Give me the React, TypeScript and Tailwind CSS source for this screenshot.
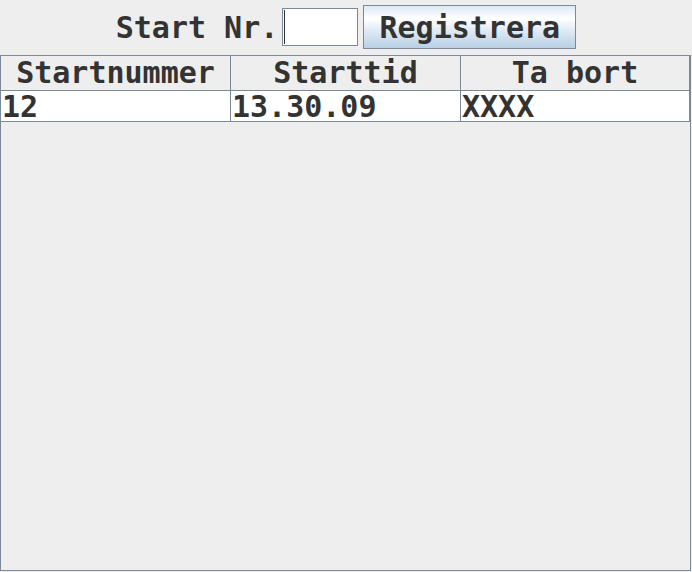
const rows = [{ nr: '12', time: '13.30.09', remove: 'XXXX' }];

const mono = "font-['DejaVu_Sans_Mono',monospace] font-bold text-[30px] text-[#333333]";

export default function App() {
  return (
    <div className={`w-[692px] h-[572px] bg-[#eeeeee] overflow-hidden ${mono}`}>
      {/* top form */}
      <div className="flex justify-center items-center h-[44px] mt-[5px] mb-[6px]">
        <span className="leading-[35px] mr-[4px]">Start Nr.</span>
        <div className="w-[76px] h-[38px] bg-white border border-[#7a8a99] flex mr-[5px]">
          <span className="w-px h-[34px] mt-[1px] ml-[1px] bg-[#333333]" />
        </div>
        <button className="w-[213px] h-[44px] border border-[#7a8a99] leading-[35px] bg-[linear-gradient(to_bottom,#dde8f3_0%,#ffffff_30%,#dde8f3_62%,#b8cfe5_100%)]">
          Registrera
        </button>
      </div>

      {/* table in scroll pane */}
      <div className="w-[691px] h-[516px] border border-[#7a8a99]">
        <div className="grid grid-cols-[230px_230px_229px] h-[35px] border-b border-[#7a8a99]">
          <div className="border-r border-[#7a8a99] text-center leading-[34px]">Startnummer</div>
          <div className="border-r border-[#7a8a99] text-center leading-[34px]">Starttid</div>
          <div className="border-r border-[#7a8a99] text-center leading-[34px]">Ta bort</div>
        </div>
        {rows.map((r) => (
          <div key={r.nr} className="grid grid-cols-[230px_230px_229px] h-[31px] bg-white border-b border-[#7a8a99] w-[689px]">
            <div className="border-r border-[#7a8a99] pl-[1px] leading-[31px]">{r.nr}</div>
            <div className="border-r border-[#7a8a99] pl-[1px] leading-[31px]">{r.time}</div>
            <div className="border-r border-[#7a8a99] pl-[1px] leading-[31px]">{r.remove}</div>
          </div>
        ))}
      </div>
    </div>
  );
}
